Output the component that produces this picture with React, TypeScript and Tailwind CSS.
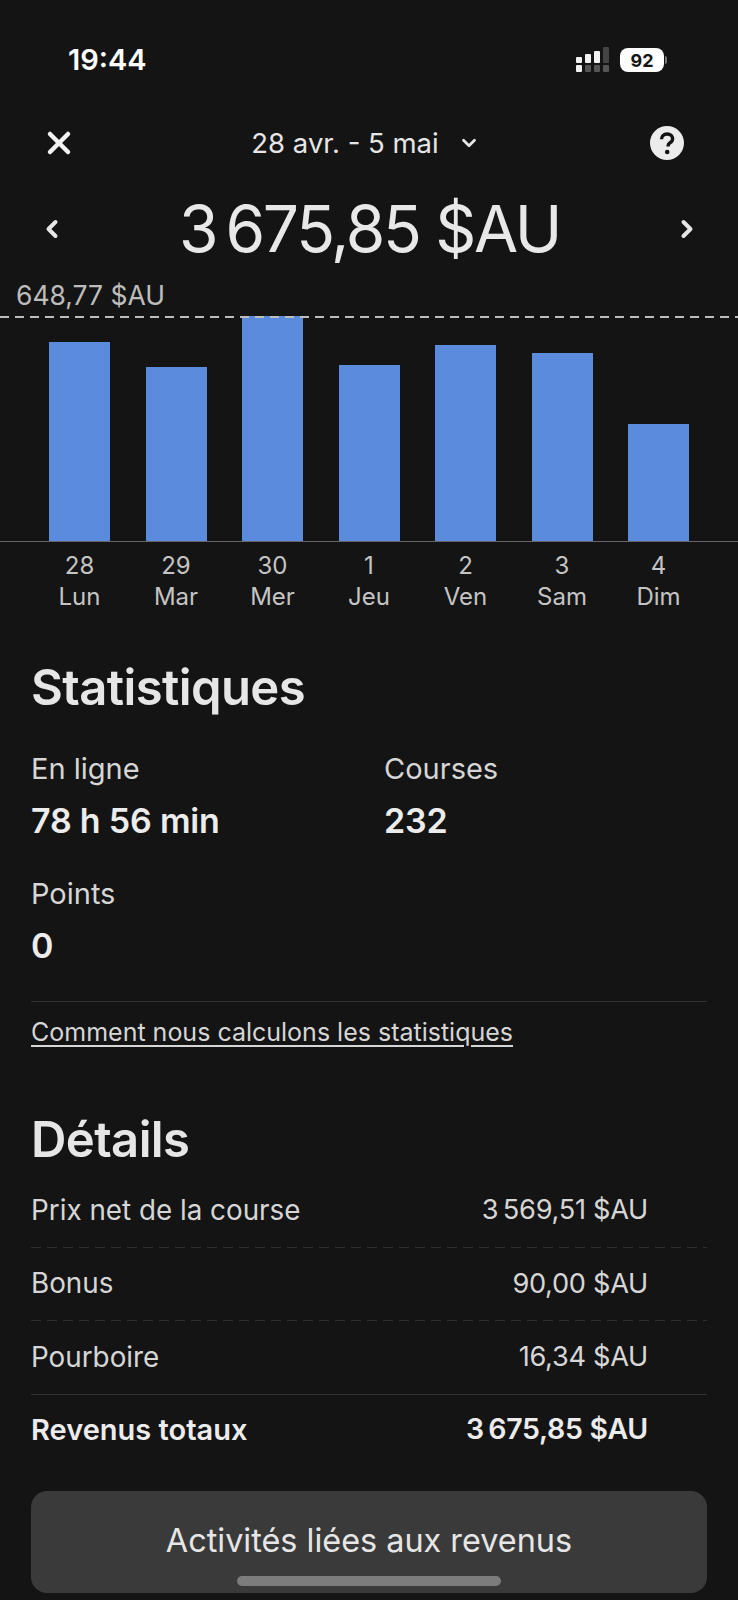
import { X, ChevronDown, ChevronLeft, ChevronRight } from "lucide-react";

const days = [
  { num: "28", name: "Lun", height: 199 },
  { num: "29", name: "Mar", height: 174 },
  { num: "30", name: "Mer", height: 225 },
  { num: "1", name: "Jeu", height: 176 },
  { num: "2", name: "Ven", height: 196 },
  { num: "3", name: "Sam", height: 188 },
  { num: "4", name: "Dim", height: 117 },
];

const details = [
  { label: "Prix net de la course", value: "3\u202f569,51 $AU" },
  { label: "Bonus", value: "90,00 $AU" },
  { label: "Pourboire", value: "16,34 $AU" },
];

function Signal() {
  return (
    <svg width="36" height="26" viewBox="0 0 36 26" fill="#f2f2f2">
      <rect x="1" y="10" width="6" height="6" rx="1" />
      <rect x="10" y="7" width="6" height="9" rx="1" />
      <rect x="19" y="4" width="6" height="12" rx="1" />
      <rect x="28" y="0" width="6" height="16" rx="1" fill="#444" />
      <rect x="1" y="18" width="6" height="7" rx="1" />
      <rect x="10" y="18" width="6" height="7" rx="1" fill="#555" />
      <rect x="19" y="18" width="6" height="7" rx="1" fill="#555" />
      <rect x="28" y="18" width="6" height="7" rx="1" fill="#555" />
    </svg>
  );
}

function StatBlock({ label, value }: { label: string; value: string }) {
  return (
    <div>
      <div className="h-[35px] text-[29px] leading-[35px] text-[#d6d6d6]">{label}</div>
      <div className="mt-[17px] h-[35px] text-[34px] font-semibold leading-[35px] tracking-[-0.2px] text-[#ececec]">{value}</div>
    </div>
  );
}

export default function App() {
  return (
    <div className="relative h-[1600px] w-[738px] overflow-hidden bg-[#141414] font-['Inter',sans-serif] text-[#e6e6e6]">
      {/* status bar */}
      <div className="flex h-[120px] items-start justify-between pl-[68px] pr-[71px] pt-[42px]">
        <span className="text-[29px] font-semibold leading-[36px] text-white">19:44</span>
        <div className="flex items-center gap-[9px] pt-[5px]">
          <Signal />
          <div className="flex items-center">
            <div className="flex h-[24px] w-[44px] items-center justify-center rounded-[8px] bg-white text-[18px] font-bold text-[#141414]">
              92
            </div>
            <div className="ml-[1px] h-[8px] w-[2px] rounded-r-full bg-[#777]" />
          </div>
        </div>
      </div>

      {/* date header */}
      <div className="flex h-[46px] items-center justify-between pl-[41px] pr-[53px]">
        <X size={36} strokeWidth={3} className="text-[#f2f2f2]" />
        <div className="ml-[5px] flex items-center gap-[19px]">
          <span className="text-[27.5px] leading-[36px] text-[#e6e6e6]">28 avr. - 5 mai</span>
          <ChevronDown size={22} strokeWidth={3} />
        </div>
        <svg width="36" height="36" viewBox="0 0 36 36">
          <circle cx="18" cy="18" r="17" fill="#ececec" />
          <path d="M12.5 14.2c0-3.2 2.4-5.2 5.6-5.2s5.5 1.9 5.5 4.7c0 2-1 3.1-2.6 4.1-1.4.9-1.9 1.5-1.9 3v.7" fill="none" stroke="#141414" strokeWidth="3.4" />
          <circle cx="18.2" cy="27" r="2.3" fill="#141414" />
        </svg>
      </div>

      {/* total */}
      <div className="mt-[23px] flex h-[80px] items-center justify-between pl-[38px] pr-[37px]">
        <ChevronLeft size={28} strokeWidth={3.4} />
        <span className="text-[64px] leading-[80px] tracking-[-2.3px] text-[#e8e8e8]">3{"\u202f"}675,85 $AU</span>
        <ChevronRight size={28} strokeWidth={3.4} />
      </div>

      {/* chart */}
      <div className="mt-[10px] pl-[16px] text-[26.5px] leading-[32px] text-[#bdbdbd]">648,77 $AU</div>
      <div className="relative mt-[5px] flex h-[226px] items-end gap-[35.5px] border-b border-[#666] pl-[49px]">
        {days.map((day) => (
          <div key={day.num} className="w-[61px] bg-[#5b8bdd]" style={{ height: day.height }} />
        ))}
        <div className="absolute inset-x-0 top-0 h-[2px] bg-[repeating-linear-gradient(90deg,#bdbdbd_0,#bdbdbd_9px,transparent_9px,transparent_15px)]" />
      </div>
      <div className="mt-[8px] flex gap-[35.5px] pl-[49px]">
        {days.map((day) => (
          <div key={day.num} className="w-[61px] whitespace-nowrap text-center text-[24px] leading-[31px] text-[#c4c4c4]">
            <div>{day.num}</div>
            <div className="flex justify-center">{day.name}</div>
          </div>
        ))}
      </div>

      {/* stats */}
      <div className="px-[31px]">
        <h2 className="mt-[46px] h-[60px] text-[49px] font-semibold leading-[60px] tracking-[-0.6px] text-[#e6e6e6]">Statistiques</h2>
        <div className="mt-[33px] grid grid-cols-[353px_1fr] gap-y-[38px]">
          <StatBlock label="En ligne" value="78 h 56 min" />
          <StatBlock label="Courses" value="232" />
          <StatBlock label="Points" value="0" />
        </div>
        <div className="mt-[38px] border-t border-[#333]" />
        <a className="mt-[13px] block text-[25px] leading-[34px] text-[#d6d6d6] underline underline-offset-4">
          Comment nous calculons les statistiques
        </a>

        {/* details */}
        <h2 className="mt-[61px] h-[60px] text-[49px] font-semibold leading-[60px] tracking-[-0.6px] text-[#e6e6e6]">Détails</h2>
        <div className="mt-[4px]">
          {details.map((row, i) => (
            <div key={row.label} className="relative flex h-[73.5px] items-center justify-between pr-[59px] text-[27.8px] text-[#d6d6d6]">
              <span>{row.label}</span>
              <span className="text-[27.2px] tracking-[-0.3px]">{row.value}</span>
              {i < 2 ? (
                <div className="absolute inset-x-0 bottom-0 h-[1px] bg-[repeating-linear-gradient(90deg,#2e2e2e_0,#2e2e2e_10px,transparent_10px,transparent_16px)]" />
              ) : (
                <div className="absolute inset-x-0 bottom-0 h-[1px] bg-[#333]" />
              )}
            </div>
          ))}
          <div className="flex h-[70px] items-center justify-between pr-[59px] font-semibold text-[#ececec]">
            <span className="text-[29px]">Revenus totaux</span>
            <span className="text-[28.5px] tracking-[-0.3px]">3{"\u202f"}675,85 $AU</span>
          </div>
        </div>
        <button className="mt-[26px] h-[102px] w-[676px] rounded-[16px] bg-[#3a3a3a] text-[32.4px] text-[#e6e6e6]">
          Activités liées aux revenus
        </button>
      </div>

      {/* home indicator */}
      <div className="absolute bottom-[14px] left-[237px] h-[10px] w-[264px] rounded-full bg-[#7c7c7c]" />
    </div>
  );
}
